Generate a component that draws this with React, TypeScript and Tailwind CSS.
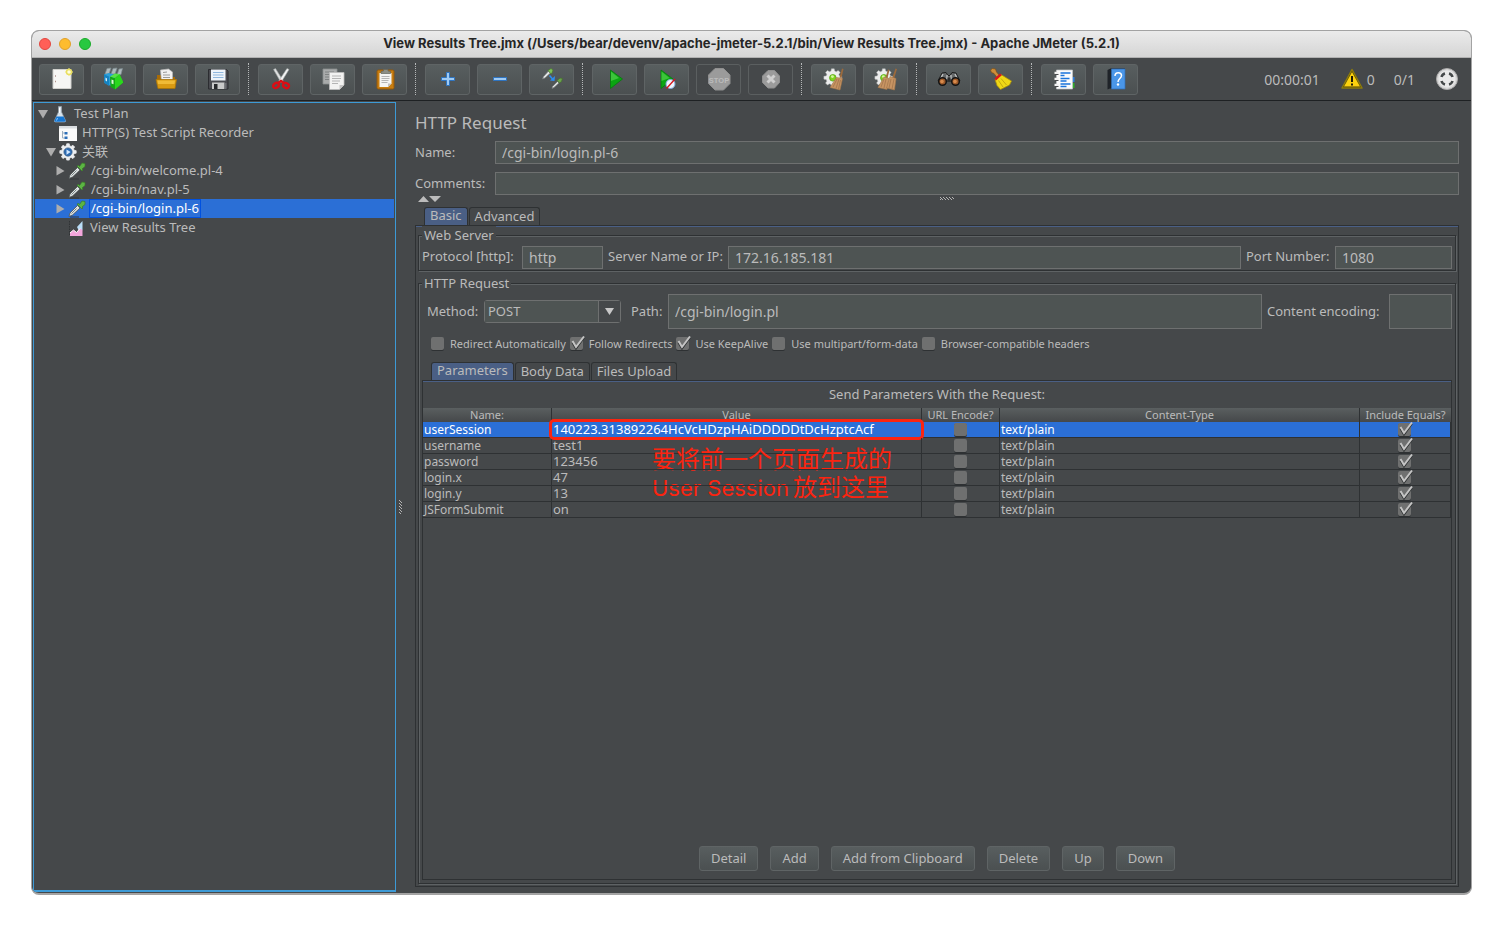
import React, { useState } from 'react';
import { clsx } from 'clsx';

type IconProps = { className?: string };
type IconType = React.ComponentType<IconProps>;

function Svg({ children, size = 24 }: { children: React.ReactNode; size?: number }) {
  return (
    <svg width={size} height={size} viewBox={`0 0 ${size} ${size}`} aria-hidden="true" className="shrink-0">
      {children}
    </svg>
  );
}

const GEAR =
  'M10.3 1h3.4l.5 2.8 2 .8 2.300-1.600 2.400 2.400-1.600 2.300.8 2 2.800.5v3.400l-2.800.5-.8 2 1.600 2.300-2.400 2.400-2.300-1.600-2 .8-.5 2.800h-3.400l-.5-2.800-2-.8-2.300 1.600-2.400-2.400 1.600-2.300-.8-2-2.800-.5v-3.400l2.800-.5.8-2-1.600-2.300 2.400-2.400 2.300 1.600 2-.8z';

const OCTAGON = 'M8 1.500h8.500L23 8v8.500L16.500 23H8l-6.500-6.500V8z';

/* ---------- toolbar icons ---------- */

const NewIcon = () => (
  <Svg>
    <path d="M3 2.500h18v19H3z" fill="#f6f6f4" stroke="#d0d0cc" />
    <path d="M5 9h1M5 14.500h1" stroke="#b0938c" strokeWidth="1.500" />
    <circle cx="19" cy="5" r="2.500" fill="#fffde0" stroke="#e9df62" strokeWidth="1.500" />
    <path d="M19 1v1M19 8v1M15 5h1M22 5h1" stroke="#f2e873" />
  </Svg>
);

const TemplatesIcon = () => (
  <Svg>
    <path d="M3 7 5 1.500l4-.5-2 6zM9 7l2-5.500 4-.5-2 6zM15 8l2-6 3.500-.5-1.500 6z" fill="#aeb9bc" stroke="#7d8b8f" strokeWidth=".7" />
    <path d="M2 7.500 7 6l6 2-2 12-8.500-4z" fill="#2b9fd8" />
    <path d="m2 7.500 5 2v9.500l-4.500-3z" fill="#1583c2" />
    <path d="M3.500 10.500 5 11.500v3l-1.500-1z" fill="#d6f1ff" />
    <path d="m16 20 6-5-3-1z" fill="#2a2d2e" />
    <path d="M8 9.500 13 11v11.500L8.500 20z" fill="#14a716" />
    <path d="m13 11 4.500-4 4 8.500L13 22.500z" fill="#2ad81d" />
    <path d="m9.500 12.500 2 .7v4l-2-.8z" fill="#dcf7d6" />
    <path d="m8 9.500 5-3 4.500.5L13 11z" fill="#56e544" />
  </Svg>
);

const OpenIcon = () => (
  <Svg>
    <path d="M3 8h5l2 2h11v3H3z" fill="#a66b08" />
    <path d="m6.500 3 8-1 4 3v9h-11z" fill="#f1f1f1" stroke="#b9b9b9" strokeWidth=".7" />
    <path d="M9 5.500 13 5M9 8h7M9 10.500h7" stroke="#9a9a9a" />
    <path d="M2 12.500h20.500l-1.500 9H4z" fill="#d99a12" stroke="#a87307" strokeWidth=".8" />
    <path d="M3.500 13.500h17.500l-.5 3.500H4z" fill="#f0bb36" />
  </Svg>
);

const SaveIcon = () => (
  <Svg>
    <path d="M2.500 2.500h18l1.500 1.500v18h-19.500z" fill="#4a4b50" stroke="#2c2d31" />
    <path d="M5 2.500h14.500v11H5z" fill="#eef4fa" />
    <path d="M7 5.500h10.500M7 8h10.500M7 10.500h10.500" stroke="#8fb7de" />
    <path d="M6 15.500h12.500V22H6z" fill="#c9c9c9" />
    <path d="M8 17h3.500v5H8z" fill="#27282b" />
    <path d="M18.500 16h2v6h-2z" fill="#6d6e73" />
  </Svg>
);

const CutIcon = () => (
  <Svg>
    <path d="m4.500 2.500 2-1 7.500 12-2 2z" fill="#dfe1e1" stroke="#9ea2a3" strokeWidth=".6" />
    <path d="m20 2.500-2-1-8 12 2 2z" fill="#f3f4f4" stroke="#a3a7a8" strokeWidth=".6" />
    <ellipse cx="7" cy="18.500" rx="3" ry="2.400" fill="none" stroke="#dd0d14" strokeWidth="2.400" transform="rotate(-30 7 18.500)" />
    <ellipse cx="17" cy="18.500" rx="3" ry="2.400" fill="none" stroke="#dd0d14" strokeWidth="2.400" transform="rotate(30 17 18.500)" />
    <path d="m9 16 3-2 3 2" fill="none" stroke="#dd0d14" strokeWidth="2.500" />
  </Svg>
);

const CopyIcon = () => (
  <Svg>
    <path d="M2 2h14v15H2z" fill="#a9abab" stroke="#8c8f8f" strokeWidth=".8" />
    <path d="M4 5h9M4 7.500h6M4 10h5M4 12.500h5" stroke="#7f8282" />
    <path d="M8.500 5.500H23v12.500L18.500 22.500h-10z" fill="#f2f2f1" stroke="#bdbdbd" strokeWidth=".8" />
    <path d="M11 9h9M11 11.500h9M11 14h8M11 16.500h6" stroke="#b4b4b4" />
    <path d="M18.500 22.500V18H23z" fill="#c4c4c4" />
  </Svg>
);

const PasteIcon = () => (
  <Svg>
    <rect x="4" y="3" width="17" height="19" rx="1.500" fill="#c77d10" stroke="#94590a" />
    <path d="M6.500 6h12v10.500L15 20H6.500z" fill="#f4f4f3" />
    <path d="M8.500 9.500h8M8.500 11.500h8M8.500 13.500h7M8.500 15.500h6" stroke="#b5b5b5" />
    <path d="M15 20v-3.500h3.500z" fill="#bfbfbf" />
    <path d="M8 6.500V4.500l2.500-.5V2.500H15V4l2.500.5v2z" fill="#8d8f86" stroke="#63655f" strokeWidth=".7" />
  </Svg>
);

const ExpandIcon = () => (
  <Svg>
    <path d="M10.500 5.500h3v5h5v3h-5v5h-3v-5h-5v-3h5z" fill="#9fcbf5" stroke="#2f74c0" />
  </Svg>
);

const CollapseIcon = () => (
  <Svg>
    <path d="M5.500 10.500h13v3h-13z" fill="#9fcbf5" stroke="#2f74c0" />
  </Svg>
);

const ToggleIcon = () => (
  <Svg>
    <path d="m2.500 12 1-2.500 5-5.500 2 2-5.500 5z" fill="#e1e4e4" stroke="#717676" strokeWidth=".7" />
    <path d="m8 3.500 3-2 2 1.500-1 3-1 1z" fill="#7fbf59" stroke="#4b7a31" strokeWidth=".7" />
    <path d="m12 21.500.5-2 5-5 1.500 1.500-5 4.500z" fill="#e1e4e4" stroke="#717676" strokeWidth=".7" />
    <path d="m17 13.500 3-2.500 2.500.5-1 3-2 1.500z" fill="#6ba34c" stroke="#446e2e" strokeWidth=".7" />
    <path d="m9.500 8.500 3.500 4" stroke="#2d8cf0" strokeWidth="1.500" />
    <path d="m14.500 14 .500-5-5 4.500z" fill="#2d8cf0" />
  </Svg>
);

const StartIcon = () => (
  <Svg>
    <path d="M7.500 3v18.500l12-9.500z" fill="#0aa512" stroke="#087a0d" strokeWidth=".8" />
    <path d="M8 4.500v9.500l8-3z" fill="#3cc43a" />
  </Svg>
);

const StartNoPausesIcon = () => (
  <Svg>
    <path d="M6 3v18.500L18 12z" fill="#0aa512" stroke="#087a0d" strokeWidth=".8" />
    <path d="M6.500 4.500v9.500l8-3z" fill="#3cc43a" />
    <circle cx="15.500" cy="17" r="4.500" fill="#eef5fd" stroke="#7fa9dc" />
    <path d="m11.500 21.500 8.500-9.500" stroke="#d8151c" strokeWidth="1.300" />
  </Svg>
);

const StopIcon = () => (
  <Svg>
    <path d={OCTAGON} fill="#9b9b9b" stroke="#8f8f8f" />
    <text x="12" y="15.500" textAnchor="middle" fontSize="7.500" fontWeight="700" fontFamily="Liberation Sans, sans-serif" fill="#bcbcbc">
      STOP
    </text>
  </Svg>
);

const ShutdownIcon = () => (
  <Svg>
    <path d="M9 3.500h6.500L20.500 9v6.500L15.500 21H9l-5.500-5.500V9z" fill="#9b9b9b" stroke="#8f8f8f" />
    <path d="m8.500 8.500 7 7m0-7-7 7" stroke="#cfcfcf" strokeWidth="3" />
  </Svg>
);

const WhiteGear = () => (
  <g transform="translate(1 1) scale(.82)">
    <path d={GEAR} fill="#eceded" stroke="#b9bbbb" strokeWidth=".6" />
    <circle cx="12" cy="12" r="4" fill="#7fd321" stroke="#5ba615" />
    <circle cx="11.500" cy="10.500" r="1.800" fill="#d4f6a0" />
  </g>
);

const ClearIcon = () => (
  <Svg>
    <WhiteGear />
    <path d="m20 1.500 1.500.5-2 9-2-.5z" fill="#9c6a3c" />
    <path d="m14.500 10.500 6 1L18 23 8 20.500z" fill="#c79463" stroke="#a3774a" strokeWidth=".6" />
    <path d="m15 12-4 8M17 12l-3 9.500M18.500 13 16.500 22" stroke="#9c7047" strokeWidth=".7" />
  </Svg>
);

const ClearAllIcon = () => (
  <Svg>
    <g transform="translate(-1 0)">
      <WhiteGear />
    </g>
    <path d="m14 2.500 1.500.5-2 8-2-.5zM21.500 1.500l1.500.5-3 10-2-.5z" fill="#9c6a3c" />
    <path d="m10 10 5 1.500-2 11L4 20.500z" fill="#c79463" stroke="#a3774a" strokeWidth=".6" />
    <path d="m16 9.500 6 2-1.500 11.500-8-2z" fill="#c79463" stroke="#a3774a" strokeWidth=".6" />
    <path d="m10 12-3 8M12 12l-2 9M17 12l-2 9M20 12l-2 10" stroke="#9c7047" strokeWidth=".7" />
  </Svg>
);

const SearchIcon = () => (
  <Svg>
    <path d="m5 6 4-.5 2 3h2l2-3 4 .5 4 8H1z" fill="#66696a" stroke="#1c1d1d" />
    <path d="M6 7 4 11M18 7l2 4M10 8v4M14 8v4" stroke="#c0c3c3" strokeWidth="1.300" />
    <circle cx="5.500" cy="14.500" r="3.800" fill="#9b5828" stroke="#141414" strokeWidth="1.500" />
    <circle cx="18.500" cy="14.500" r="3.800" fill="#9b5828" stroke="#141414" strokeWidth="1.500" />
    <circle cx="5" cy="14.500" r="1.800" fill="#d78a4c" />
    <circle cx="18" cy="14.500" r="1.800" fill="#d78a4c" />
    <path d="M10.500 10.500h3v4h-3z" fill="#2b2c2c" />
  </Svg>
);

const ResetSearchIcon = () => (
  <Svg>
    <path d="m1.500 3 2-1.500 3 .5 1 3 3 3.500-2.500 2-3-4-2.500-1z" fill="#cf8e3a" stroke="#7f5015" strokeWidth=".7" />
    <path d="m6 12.500 6-5 10.500 6.500-2 4-9 4.500-3.500-4z" fill="#f0d816" stroke="#a8900a" strokeWidth=".8" />
    <path d="m5.500 11.500 5.500-5 2 1.500-6 5.500z" fill="#d8181c" />
    <path d="m9.500 13.500 4.500 6.500M12 11.500l5.500 6.500" stroke="#b79c0c" strokeWidth=".8" />
  </Svg>
);

const FunctionHelperIcon = () => (
  <Svg>
    <path d="M18 10h4.500v5H18z" fill="#2d7fe0" />
    <path d="M18 16h4.500v5H18z" fill="#2fae2a" />
    <path d="M4.500 3h16v19h-16z" fill="#fbfbfb" stroke="#c3c6c8" strokeWidth=".7" />
    <path d="M8.500 6h10M8.500 8.500h4M8.500 11.500h9M8.500 14h6M8.500 17h10M8.500 19.500h6" stroke="#1b74dc" strokeWidth="1.300" />
    <path d="M2.500 6h4M2.500 12h4M2.500 18h4" stroke="#f2f2f2" strokeWidth="2.500" />
    <path d="M2.500 7.500h4M2.500 13.500h4M2.500 19.500h4" stroke="#4a4c4e" />
  </Svg>
);

const HelpIcon = () => (
  <Svg>
    <path d="m3.500 3 3-1.500h14.500v20H6l-2.500 1z" fill="#1f2328" />
    <path d="M7.500 2H21v20H7.500z" fill="#4a96e8" stroke="#2f6fb8" strokeWidth=".7" />
    <path d="M11 9c0-4.500 6.500-4 6.500-.5 0 3-3.500 3-3.500 6.500" fill="none" stroke="#fff" strokeWidth="1.500" />
    <circle cx="14" cy="17.500" r="1.200" fill="#fff" />
  </Svg>
);

const WarningIcon = () => (
  <Svg>
    <path d="M12 2.500 22 21H2z" fill="#4a3d05" stroke="#8c7b0c" strokeWidth="1.500" strokeLinejoin="round" />
    <path d="M12 5 20 19.500H4z" fill="#fcd20e" />
    <path d="M12 9v6" stroke="#1d1a05" strokeWidth="2" />
    <path d="M11 16.500h2v2h-2z" fill="#1d1a05" />
  </Svg>
);

const EngineIcon = () => (
  <Svg>
    <circle cx="12" cy="12" r="10.500" fill="#d9d9d9" stroke="#a9a9a9" />
    <circle cx="12" cy="12" r="8.500" fill="#e9e9e9" />
    <path d="M10 6.500C8 7 7 8 6.500 10M14 6.500c2 .5 3 1.500 3.500 3.500M10 17.500C8 17 7 16 6.500 14M14 17.500c2-.5 3-1.500 3.500-3.500" fill="none" stroke="#45494a" strokeWidth="2.500" />
  </Svg>
);

/* ---------- tree icons ---------- */

const FlaskIcon = () => (
  <Svg size={18}>
    <path d="M7.500 1.500h3V7l4 8.500c.5 1-.2 1.500-1 1.500h-9c-.8 0-1.500-.5-1-1.500l4-8.500z" fill="#d8e2ea" stroke="#98a4ad" strokeWidth=".7" />
    <path d="m5.500 11.500-2 4c-.3.800.2 1.200 1 1.200h9c.8 0 1.300-.4 1-1.200l-2-4z" fill="#1676d2" />
    <path d="M8.500 3v5" stroke="#fff" />
    <path d="m6.500 13-1 2.500" stroke="#8fcbff" />
  </Svg>
);

const RecorderIcon = () => (
  <Svg size={18}>
    <path d="M0 2h18v15H0z" fill="#fafafa" />
    <path d="M0 2h18v2.500H0z" fill="#dadde0" />
    <path d="M3.500 7v7h2M3.500 9h2" fill="none" stroke="#9fb0c0" />
    <path d="M5.500 8h3v2.500h-3zM5.500 12.500h3V15h-3z" fill="#2d6fb8" />
  </Svg>
);

const ThreadGroupIcon = () => (
  <Svg size={18}>
    <g transform="scale(.75)">
      <path d={GEAR} fill="#eceef0" stroke="#eceef0" />
      <circle cx="12" cy="12" r="5.500" fill="#2b6bb3" stroke="#3d5f85" />
      <path d="m10 8.500 5.500 3.500-5.500 3.500z" fill="#cfe6ff" />
    </g>
  </Svg>
);

const SamplerIcon = () => (
  <Svg size={18}>
    <path d="M2 17h9" stroke="#35393b" />
    <path d="m1 16.500 1-3.500 7.500-7.500 2.500 2.500-7.500 7z" fill="#dfe4e4" stroke="#4c5353" strokeWidth=".8" />
    <path d="m3.500 13.500 5-5" stroke="#7b8686" />
    <path d="m9 4 1.500-.5 1 1L14 1l3 .5v3l-3 2.500 1 1-1 1z" fill="#5cb544" stroke="#397d27" strokeWidth=".7" />
  </Svg>
);

const ResultsIcon = () => (
  <Svg size={18}>
    <path d="M2.500 2v15" stroke="#303335" strokeDasharray="1.500 1" />
    <path d="m10 8 5.500-6v9l-3 2z" fill="#b9ddf7" />
    <path d="M3 14 6.500 11l3 2.500L13 9.500l2.500 1.500v6H3z" fill="#f3a6dc" />
    <path d="M3 14 6.500 11l3 2.500L13 9.500" fill="none" stroke="#fff" />
  </Svg>
);

const Triangle = ({ open }: { open: boolean }) => (
  <svg width="10" height="10" viewBox="0 0 10 10" className="shrink-0" aria-hidden="true">
    <path d={open ? 'M0 1h10L5 9.500z' : 'M1.500 0v9.500L9.500 5z'} fill="#adadad" />
  </svg>
);

/* ---------- data ---------- */

const toolGroups: { name: string; icon: IconType; disabled?: boolean }[][] = [
  [
    { name: 'New', icon: NewIcon },
    { name: 'Templates', icon: TemplatesIcon },
    { name: 'Open', icon: OpenIcon },
    { name: 'Save', icon: SaveIcon },
  ],
  [
    { name: 'Cut', icon: CutIcon },
    { name: 'Copy', icon: CopyIcon },
    { name: 'Paste', icon: PasteIcon },
  ],
  [
    { name: 'Expand all', icon: ExpandIcon },
    { name: 'Collapse all', icon: CollapseIcon },
    { name: 'Toggle', icon: ToggleIcon },
  ],
  [
    { name: 'Start', icon: StartIcon },
    { name: 'Start no pauses', icon: StartNoPausesIcon },
    { name: 'Stop', icon: StopIcon, disabled: true },
    { name: 'Shutdown', icon: ShutdownIcon, disabled: true },
  ],
  [
    { name: 'Clear', icon: ClearIcon },
    { name: 'Clear all', icon: ClearAllIcon },
  ],
  [
    { name: 'Search', icon: SearchIcon },
    { name: 'Reset search', icon: ResetSearchIcon },
  ],
  [
    { name: 'Function helper', icon: FunctionHelperIcon },
    { name: 'Help', icon: HelpIcon },
  ],
];

const treeNodes: { name: string; indent: string; icon: IconType; open?: boolean }[] = [
  { name: 'Test Plan', indent: 'pl-[3px]', icon: FlaskIcon, open: true },
  { name: 'HTTP(S) Test Script Recorder', indent: 'pl-[11px]', icon: RecorderIcon },
  { name: '关联', indent: 'pl-[11px]', icon: ThreadGroupIcon, open: true },
  { name: '/cgi-bin/welcome.pl-4', indent: 'pl-5', icon: SamplerIcon, open: false },
  { name: '/cgi-bin/nav.pl-5', indent: 'pl-5', icon: SamplerIcon, open: false },
  { name: '/cgi-bin/login.pl-6', indent: 'pl-5', icon: SamplerIcon, open: false },
  { name: 'View Results Tree', indent: 'pl-[19px]', icon: ResultsIcon },
];

const params = [
  { name: 'userSession', value: '140223.313892264HcVcHDzpHAiDDDDDtDcHzptcAcf' },
  { name: 'username', value: 'test1' },
  { name: 'password', value: '123456' },
  { name: 'login.x', value: '47' },
  { name: 'login.y', value: '13' },
  { name: 'JSFormSubmit', value: 'on' },
];

const options = [
  { name: 'Redirect Automatically', checked: false },
  { name: 'Follow Redirects', checked: true },
  { name: 'Use KeepAlive', checked: true },
  { name: 'Use multipart/form-data', checked: false },
  { name: 'Browser-compatible headers', checked: false },
];

const actions = ['Detail', 'Add', 'Add from Clipboard', 'Delete', 'Up', 'Down'];

/* ---------- controls ---------- */

const field = 'min-w-0 border border-[#6e7070] bg-[#4e5453] px-1.5 text-[14px] text-[#bbbbbb] outline-none';
const etched = 'min-w-0 border border-[#2e3133] shadow-[inset_1px_1px_0_#5e6264,1px_1px_0_#5e6264]';
const raised = 'rounded-[3px] border border-[#5f6465] bg-linear-to-b from-[#585e5f] to-[#4b5051]';

function Checkbox({ name, checked }: { name?: string; checked: boolean }) {
  return (
    <span className="grid">
      <input
        type="checkbox"
        aria-label={name}
        defaultChecked={checked}
        className="peer col-start-1 row-start-1 h-[13px] w-[13px] appearance-none self-center rounded-[2px] bg-[#6f7070] shadow-[0_1px_0_#2e3133]"
      />
      <svg
        width="16"
        height="15"
        viewBox="0 0 16 15"
        className="pointer-events-none invisible col-start-1 row-start-1 peer-checked:visible"
        aria-hidden="true"
      >
        <path d="m2.500 6.500 3.500 6 8-11" fill="none" stroke="#2c2f30" strokeWidth="2" />
        <path d="m2.500 5 3.500 6 8-10.500" fill="none" stroke="#c4c4c4" strokeWidth="2" />
      </svg>
    </span>
  );
}

function Tabs({ names }: { names: string[] }) {
  const [active, setActive] = useState(names[0]);
  return (
    <div role="tablist" className="flex h-[18px] gap-px pl-[9px]">
      {names.map(name => (
        <button
          key={name}
          type="button"
          role="tab"
          aria-selected={name === active}
          onClick={() => setActive(name)}
          className={clsx(
            'rounded-t-[3px] border border-b-0 border-[#2e3133] px-[5px] text-[13px]',
            name === active ? 'bg-[#4a5f85] pb-0.5 leading-[15px]' : 'leading-[17px]'
          )}
        >
          {name}
        </button>
      ))}
    </div>
  );
}

function Toolbar() {
  return (
    <div className="flex h-[43px] items-center gap-[7px] border-b border-[#1e2123] px-[7px]">
      {toolGroups.map((group, i) => (
        <React.Fragment key={group[0].name}>
          {i > 0 && (
            <div className="w-1 pl-px">
              <div className="h-8 border-l border-dotted border-[#b5b7b8]" />
            </div>
          )}
          {group.map(tool => (
            <button
              key={tool.name}
              type="button"
              aria-label={tool.name}
              disabled={tool.disabled}
              className={clsx(
                'flex h-[31px] w-[45px] shrink-0 items-center justify-center',
                tool.disabled ? 'rounded-[3px] border border-[#5b5f60]' : raised
              )}
            >
              <tool.icon />
            </button>
          ))}
        </React.Fragment>
      ))}
      <div className="ml-auto flex items-center pr-[5px] text-[14px]">
        <span>00:00:01</span>
        <span className="ml-5 flex items-center gap-[3px]">
          <WarningIcon />0
        </span>
        <span className="mr-5 ml-[19px]">0/1</span>
        <EngineIcon />
      </div>
    </div>
  );
}

function TestTree() {
  const [selected, setSelected] = useState('/cgi-bin/login.pl-6');
  return (
    <nav className="my-px w-[363px] shrink-0 border border-b-2 border-[#3d9ad6] p-px">
      <ul>
        {treeNodes.map(node => (
          <li
            key={node.name}
            onClick={() => setSelected(node.name)}
            className={clsx(
              'flex h-[19px] items-center text-[13px] leading-[17px]',
              node.indent,
              node.name === selected && 'bg-[#2b6fd6] text-white'
            )}
          >
            <span className="mr-[3px] w-2.5 shrink-0">{node.open !== undefined && <Triangle open={node.open} />}</span>
            <node.icon />
            <span
              className={clsx(
                'ml-[3px] border px-px',
                node.name === selected ? 'border-[#0051e0]' : 'border-transparent'
              )}
            >
              {node.name}
            </span>
          </li>
        ))}
      </ul>
    </nav>
  );
}

function ParametersTable() {
  return (
    <table className="w-full table-fixed border-separate border-spacing-0 text-left text-[12px] leading-[15px]">
      <colgroup>
        <col className="w-[129px]" />
        <col className="w-[370px]" />
        <col className="w-[78px]" />
        <col />
        <col className="w-[91px]" />
      </colgroup>
      <thead>
        <tr className="h-3.5 bg-linear-to-b from-[#5a5f60] to-[#45484a] text-center text-[11px] leading-[14px]">
          {['Name:', 'Value', 'URL Encode?', 'Content-Type', 'Include Equals?'].map(head => (
            <th key={head} className="border-r border-[#2e3133] p-0 font-normal whitespace-nowrap last:border-r-0">
              {head}
            </th>
          ))}
        </tr>
      </thead>
      <tbody>
        {params.map((param, i) => (
          <tr
            key={param.name}
            className={clsx(
              'h-4 [&>td]:border-r [&>td]:border-b [&>td]:border-[#2e3133] [&>td]:py-0',
              i === 0 && 'bg-[#2b6fd6] text-white'
            )}
          >
            <td className="px-px">{param.name}</td>
            <td className="relative px-px text-[13px]">
              {param.value}
              {i === 0 && <div className="absolute -inset-[3px] rounded-[5px] border-3 border-[#fb2410]" />}
              {i === 1 && (
                <p className="absolute top-2 left-[100px] font-['Inter','Noto_Sans_CJK_SC',sans-serif] text-[24px] leading-7 whitespace-nowrap text-[#fb2410]">
                  要将前一个页面生成的
                  <br />
                  <span className="mr-1 text-[22px]">User Session</span>放到这里
                </p>
              )}
            </td>
            <td className="p-0">
              <div className="flex h-[15px] items-center justify-center pl-0.5">
                <Checkbox name={`URL encode ${param.name}`} checked={false} />
              </div>
            </td>
            <td className="px-px">text/plain</td>
            <td className="p-0">
              <div className="flex h-[15px] items-center justify-center pl-0.5">
                <Checkbox name={`Include equals ${param.name}`} checked />
              </div>
            </td>
          </tr>
        ))}
      </tbody>
    </table>
  );
}

function HttpRequestPanel() {
  return (
    <main className="flex min-w-0 flex-1 flex-col pt-2.5 pr-3 pb-1.5 pl-[11px]">
      <h1 className="text-[17px] leading-6">HTTP Request</h1>
      <div className="mt-1.5 flex h-[23px] items-center">
        <label htmlFor="name" className="w-20 shrink-0">Name:</label>
        <input id="name" defaultValue="/cgi-bin/login.pl-6" className={clsx(field, 'h-full flex-1')} />
      </div>
      <div className="mt-2 flex h-[23px] items-center">
        <label htmlFor="comments" className="w-20 shrink-0">Comments:</label>
        <input id="comments" className={clsx(field, 'h-full flex-1')} />
      </div>
      <div className="flex h-3 items-start pt-px pr-2 pl-[3px]">
        <svg width="24" height="6" viewBox="0 0 24 6" aria-hidden="true">
          <path d="M0 6h11L5.500 0zM11 0h12l-6 6z" fill="#bcbcbc" />
        </svg>
        <svg width="16" height="5" viewBox="0 0 16 5" className="mx-auto" aria-hidden="true">
          <path d="m1 1 3 3m0-3 3 3m0-3 3 3m0-3 3 3m0-3 2 2M1 3l1 1" stroke="#b5b5b5" />
        </svg>
      </div>

      <Tabs names={['Basic', 'Advanced']} />
      <section className="flex flex-1 flex-col border border-[#2e3133] px-0.5 pb-0.5 shadow-[inset_0_1px_0_#4a5f85]">
        <fieldset className={etched}>
          <legend className="ml-[3px] bg-[#45484a] px-0.5 leading-[18px]">Web Server</legend>
          <div className="flex h-[26px] items-center py-px pr-[3px] pl-[3px]">
            <label htmlFor="protocol" className="w-[100px] shrink-0">Protocol [http]:</label>
            <input id="protocol" defaultValue="http" className={clsx(field, 'h-[23px] w-[81px] shrink-0')} />
            <label htmlFor="server" className="w-[125px] shrink-0 pl-[5px]">Server Name or IP:</label>
            <input id="server" defaultValue="172.16.185.181" className={clsx(field, 'h-[23px] flex-1')} />
            <label htmlFor="port" className="w-[94px] shrink-0 pl-[5px]">Port Number:</label>
            <input id="port" defaultValue="1080" className={clsx(field, 'h-[23px] w-[117px] shrink-0')} />
          </div>
        </fieldset>

        <fieldset className={clsx(etched, 'mt-[3px] flex flex-1 flex-col')}>
          <legend className="ml-[3px] bg-[#45484a] px-0.5 leading-[18px]">HTTP Request</legend>
          <div className="flex items-center pt-0.5 pr-[3px] pl-2">
            <label htmlFor="method" className="w-[57px] shrink-0">Method:</label>
            <div className="grid w-[137px] shrink-0 grid-cols-[1fr_22px] rounded-[3px] border border-[#6e7070]">
              <select
                id="method"
                defaultValue="POST"
                className="col-span-2 col-start-1 row-start-1 h-[21px] appearance-none bg-[#4e5453] pl-[3px] text-[13px] leading-[19px] outline-none"
              >
                <option>GET</option>
                <option>POST</option>
                <option>PUT</option>
              </select>
              <span className="pointer-events-none col-start-2 row-start-1 flex items-center justify-center border-l border-[#6e7070] bg-[#45484a]">
                <svg width="9" height="7" viewBox="0 0 9 7" aria-hidden="true">
                  <path d="M0 0h9L4.500 7z" fill="#c8c8c8" />
                </svg>
              </span>
            </div>
            <label htmlFor="path" className="w-[47px] shrink-0 pl-2.5">Path:</label>
            <input id="path" defaultValue="/cgi-bin/login.pl" className={clsx(field, 'h-[35px] flex-1')} />
            <label htmlFor="encoding" className="w-[127px] shrink-0 pl-[5px]">Content encoding:</label>
            <input id="encoding" className={clsx(field, 'h-[35px] w-[63px] shrink-0')} />
          </div>
          <div className="mb-1 flex h-[29px] items-center gap-1 pl-3">
            {options.map(option => (
              <label key={option.name} className="flex items-center gap-[3px] text-[11px] leading-4">
                <Checkbox checked={option.checked} />
                {option.name}
              </label>
            ))}
          </div>

          <div className="flex flex-1 flex-col px-[3px] pb-[3px]">
            <Tabs names={['Parameters', 'Body Data', 'Files Upload']} />
            <div className="flex flex-1 flex-col border border-[#2e3133] pb-2 shadow-[inset_0_1px_0_#4a5f85]">
              <h2 className="py-1 text-center leading-[19px]">Send Parameters With the Request:</h2>
              <ParametersTable />
              <div className="mt-auto flex justify-center gap-3">
                {actions.map(action => (
                  <button key={action} type="button" className={clsx(raised, 'h-[25px] px-[11px]')}>
                    {action}
                  </button>
                ))}
              </div>
            </div>
          </div>
        </fieldset>
      </section>
    </main>
  );
}

export default function App() {
  return (
    <div className="flex min-h-screen flex-col bg-white px-[30px] pt-[30px] pb-[30px] pl-[31px]">
      <div className="flex flex-1 flex-col overflow-hidden rounded-lg border border-b-2 border-[#a3a3a3] bg-[#45484a] font-['Noto_Sans','Noto_Sans_CJK_SC',sans-serif] text-[13px] text-[#bbbbbb]">
        <header className="flex h-[27px] items-center border-b border-[#b1b1b1] bg-linear-to-b from-[#ebebeb] to-[#d5d5d5] px-[7px]">
          <div className="flex w-[52px] gap-2">
            <button type="button" aria-label="Close" className="h-3 w-3 rounded-full border border-[#e2463f] bg-[#ff5f57]" />
            <button type="button" aria-label="Minimize" className="h-3 w-3 rounded-full border border-[#e0a029] bg-[#febc2e]" />
            <button type="button" aria-label="Zoom" className="h-3 w-3 rounded-full border border-[#1aab29] bg-[#28c840]" />
          </div>
          <div className="flex-1 pr-[52px] text-center font-['Inter',sans-serif] text-[13px] font-bold text-[#262626]">
            View Results Tree.jmx (/Users/bear/devenv/apache-jmeter-5.2.1/bin/View Results Tree.jmx) - Apache JMeter (5.2.1)
          </div>
        </header>
        <Toolbar />
        <div className="flex flex-1 pl-px">
          <TestTree />
          <div className="flex w-2 shrink-0 items-center justify-center pt-5">
            <svg width="5" height="16" viewBox="0 0 5 16" aria-hidden="true">
              <path d="m1 1 3 3M1 4l3 3M1 7l3 3M1 10l3 3M1 13l2 2" stroke="#b5b5b5" />
            </svg>
          </div>
          <HttpRequestPanel />
        </div>
      </div>
    </div>
  );
}
